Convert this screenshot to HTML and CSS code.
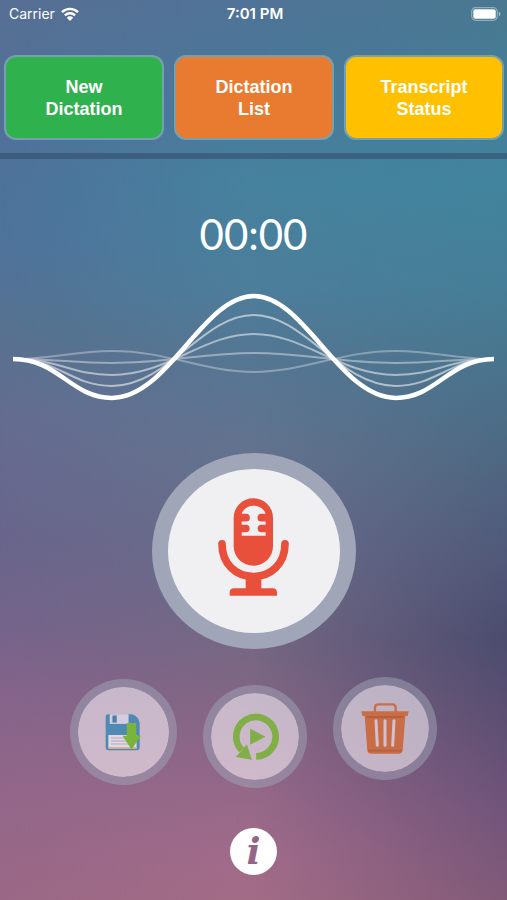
FILE: index.html
```html
<!DOCTYPE html>
<html lang="en">
<head>
<meta charset="utf-8">
<meta name="viewport" content="width=device-width, initial-scale=1">
<title>Dictation Recorder</title>
<link rel="stylesheet" href="styles.css">
</head>
<body>
<div class="screen">
  <div class="statusbar">
    <div class="carrier">
      <span>Carrier</span>
      <svg class="wifi" viewBox="0 0 18 14" aria-hidden="true">
        <path d="M1 5.2a11.4 11.4 0 0 1 16 0M3.9 8.3a7.2 7.2 0 0 1 10.2 0" fill="none" stroke="#fff" stroke-width="2.4"/>
        <path d="M9 14l-3.200-3.300a4.500 4.500 0 0 1 6.400 0z" fill="#fff"/>
      </svg>
    </div>
    <div class="clock">7:01 PM</div>
    <svg class="battery" viewBox="0 0 30 14" aria-hidden="true">
      <rect x="0.700" y="0.700" width="25.600" height="12.600" rx="4" fill="none" stroke="#fff" stroke-opacity=".4" stroke-width="1.200"/>
      <rect x="2.300" y="2.300" width="22.400" height="9.400" rx="2" fill="#fff"/>
      <path d="M27.800 4.800q1.700 .6 1.700 2.200t-1.700 2.200z" fill="#fff" fill-opacity=".5"/>
    </svg>
  </div>

  <nav class="tabs">
    <button class="tab tab-new" type="button">New<br>Dictation</button>
    <button class="tab tab-list" type="button">Dictation<br>List</button>
    <button class="tab tab-status" type="button">Transcript<br>Status</button>
  </nav>

  <main class="recorder">
    <div class="timer">00:00</div>

    <svg class="wave" viewBox="0 0 482 110" fill="none" stroke="#fff" aria-hidden="true">
      <g stroke-width="2">
        <path stroke-opacity=".32" d="M0 67C46 67 58 59 99 59C155 59 190 80 241 80C292 80 327 59 383 59C424 59 436 67 482 67"/>
        <path stroke-opacity=".4" d="M0 67C46 67 58 71 99 71C155 71 190 61 241 61C292 61 327 71 383 71C424 71 436 67 482 67"/>
        <path stroke-opacity=".5" d="M0 67C46 67 58 83 99 83C155 83 190 42 241 42C292 42 327 83 383 83C424 83 436 67 482 67"/>
        <path stroke-opacity=".55" d="M0 67C46 67 58 94 99 94C155 94 190 23 241 23C292 23 327 94 383 94C424 94 436 67 482 67"/>
      </g>
      <path stroke-width="4.500" d="M0 67C46 67 58 106 99 106C155 106 190 4 241 4C292 4 327 106 383 106C424 106 436 67 482 67"/>
    </svg>

    <button class="round record" type="button" aria-label="Record">
      <svg viewBox="220 160 213 293" aria-hidden="true">
        <rect x="267" y="160" width="118" height="203" rx="59" fill="#e8503c"/>
        <path d="M291 207C296 192 310 183 327 183S358 192 363 207H350a11.500 11.500 0 0 0 0 23H363V240H350a11 11 0 0 0 0 22H363V273H291V262H304a11 11 0 0 0 0-22H291V230H304a11.500 11.500 0 0 0 0-23Z" fill="#f0f0f3"/>
        <path d="M232 297C232 358 274 395 326 395S421 358 421 297" fill="none" stroke="#e8503c" stroke-width="23" stroke-linecap="round"/>
        <path d="M303 395h47v35h34q13 0 13 13v10H255v-10q0-13 13-13h35z" fill="#e8503c"/>
      </svg>
    </button>

    <div class="actions">
      <button class="round small save" type="button" aria-label="Save">
        <svg viewBox="130 140 110 112" aria-hidden="true">
          <path d="M139 143h72q20 8 22 26v74q0 7-7 7h-87q-7 0-7-7v-93q0-7 7-7z" fill="#5189b5"/>
          <path d="M144 143h56v29h-56z" fill="#d3cddd"/>
          <path d="M152 147h13v21h-13z" fill="#527ea9"/>
          <path d="M140 205h84v40h-84z" fill="#e1d8e2"/>
          <path d="M148 214h64M148 223h62M148 232h66" stroke="#b2a5be" stroke-width="3"/>
          <path d="M140 241h84v5h-84z" fill="#d9aa83"/>
          <path d="M195 169h28v38h14l-28 41-27-41h13z" fill="#7bb43a"/>
        </svg>
      </button>
      <button class="round small replay" type="button" aria-label="Play">
        <svg viewBox="108 131 140 141" aria-hidden="true">
          <path d="M180 261A59 59 0 1 0 136 242" fill="none" stroke="#82ae48" stroke-width="20"/>
          <path d="M152 225L167 271 119 263zM162 178L208 202 162 226z" fill="#82ae48"/>
        </svg>
      </button>
      <button class="round small trash" type="button" aria-label="Delete">
        <svg viewBox="121 103 144 153" aria-hidden="true">
          <path d="M163 130v-13q0-10 10-10h42q10 0 10 10v13" fill="none" stroke="#c76d48" stroke-width="7"/>
          <path d="M122 128h142l-3 14h-7l-8 103q-1 10-10 10h-86q-9 0-10-10l-8-103h-7z" fill="#c96d46"/>
          <path d="M137 145h112" stroke="#ae5b40" stroke-width="5"/>
          <path d="M166 156l4 74M193 156v74M220 156l-4 74" stroke="#d4c1cd" stroke-width="9" stroke-linecap="round"/>
          <path d="M142 246h101" stroke="#b65f42" stroke-width="5"/>
        </svg>
      </button>
    </div>

    <button class="info" type="button" aria-label="Information">i</button>
  </main>
</div>
</body>
</html>
```

FILE: styles.css
```css
* {
  box-sizing: border-box;
}

body {
  margin: 0;
  color: #fff;
  font-family: Inter, sans-serif;
}

button {
  margin: 0;
  padding: 0;
  color: inherit;
  cursor: pointer;
}

/* Three vertical colour ramps (left, centre, right) blended across the width. */
.screen {
  position: relative;
  isolation: isolate;
  display: flex;
  flex-direction: column;
  min-height: 100vh;
  overflow: hidden;
  background: linear-gradient(#586f94 0%, #4e729b 20%, #4f739c 27%, #57718f 37%, #656d90 46%, #69658c 60%, #74648b 69%, #85648b 77%, #93678a 88%, #9b6886 100%);
}

.screen::before,
.screen::after {
  content: "";
  position: absolute;
  inset: 0;
  z-index: -1;
}

.screen::before {
  background: linear-gradient(#4f7397 0%, #487c9c 14%, #45829e 20%, #4c7e9b 32%, #557693 40%, #63738f 50%, #6a6b89 62%, #786783 73%, #8c6687 83%, #a16b8a 95%, #a26c86 100%);
  mask-image: linear-gradient(to right, transparent, #000 50%);
}

.screen::after {
  background: linear-gradient(#497890 0%, #43819b 16%, #41849d 20%, #467e97 32%, #4a718a 43%, #4e6681 52%, #515879 62%, #4b4c6e 71%, #5c4f72 80%, #71547a 90%, #815a78 100%);
  mask-image: linear-gradient(to right, transparent 50%, #000);
}

.statusbar {
  display: grid;
  grid-template-columns: 1fr auto 1fr;
  align-items: center;
  height: 28px;
  padding: 0 6px 0 9px;
  font-size: 14px;
  line-height: 20px;
}

.carrier {
  display: flex;
  align-items: center;
  gap: 6px;
}

.wifi {
  width: 18px;
  height: 14px;
}

.clock {
  font-size: 15px;
  font-weight: 600;
}

.battery {
  justify-self: end;
  width: 30px;
  height: 14px;
}

.tabs {
  display: grid;
  grid-template-columns: repeat(3, 1fr);
  gap: 10px;
  padding: 27px 3px 13px 4px;
  border-bottom: 6px solid rgba(52, 78, 108, 0.6);
}

.tab {
  height: 85px;
  border: 2px solid #76a0b0;
  border-radius: 12px;
  font: bold 18px/22px "Liberation Sans", Arial, sans-serif;
}

.tab-new {
  background: #2fb14e;
}

.tab-list {
  background: #e97b30;
}

.tab-status {
  background: #ffc000;
}

.recorder {
  display: flex;
  flex-direction: column;
  align-items: center;
}

.timer {
  margin-top: 50px;
  font-family: Lato, sans-serif;
  font-size: 42px;
  line-height: 50px;
}

.wave {
  width: 95%;
  margin-top: 33px;
}

.round {
  display: grid;
  place-items: center;
  border-style: solid;
  border-radius: 50%;
  background-clip: padding-box;
}

.record {
  width: 204px;
  height: 196px;
  margin-top: 51px;
  padding-bottom: 8px;
  border-width: 16px;
  border-color: #a0a5b8;
  background-color: #f0f0f3;
  background-clip: border-box;
}

.record svg {
  width: 71px;
  height: 98px;
}

.actions {
  display: flex;
  align-items: center;
  gap: 26px;
  height: 111px;
  margin-top: 28px;
}

.small {
  width: 104px;
  height: 103px;
  border-width: 8px;
  border-color: rgba(160, 165, 184, 0.5);
  background-color: rgba(255, 250, 255, 0.56);
}

.save {
  width: 107px;
  height: 106px;
}

.save svg {
  width: 37px;
  height: 38px;
}

.replay {
  align-self: flex-end;
}

.replay svg {
  width: 47px;
  height: 47px;
}

.trash {
  align-self: flex-start;
}

.trash svg {
  width: 48px;
  height: 51px;
}

.info {
  width: 47px;
  height: 47px;
  margin-top: 40px;
  border: 0;
  border-radius: 50%;
  background: #fff;
  color: #936688;
  font: italic bold 37px/44px "DejaVu Serif", serif;
}
```
